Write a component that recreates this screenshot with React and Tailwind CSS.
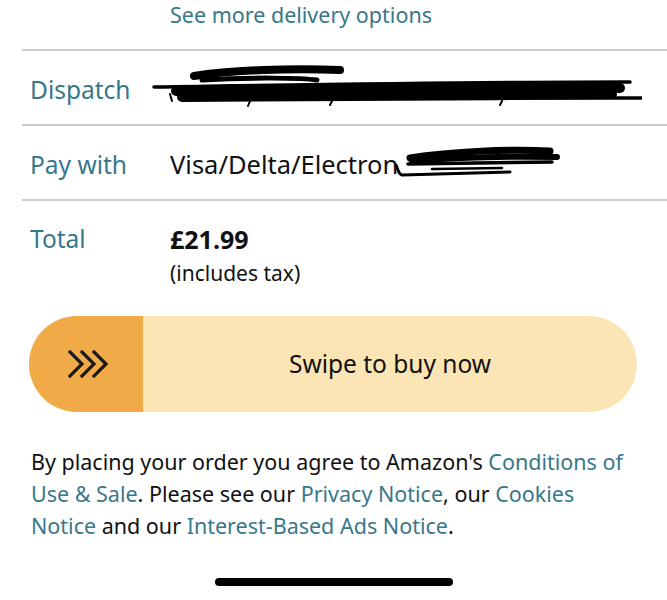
import React from "react";

const teal = "text-[#37788a]";

function Chevrons() {
  return (
    <svg width="42" height="28" viewBox="0 0 42 28" fill="none">
      {[0, 12, 24].map((x) => (
        <path
          key={x}
          d={`M${x + 2} 2 L${x + 14} 14 L${x + 2} 26`}
          stroke="#1a1a1a"
          strokeWidth="3.2"
          strokeLinecap="square"
          strokeLinejoin="miter"
        />
      ))}
    </svg>
  );
}

function DispatchScribble() {
  return (
    <svg width="500" height="50" viewBox="0 0 500 50" fill="none" className="block">
      <path d="M52 12 C90 6 150 4 198 6" stroke="#000" strokeWidth="8" strokeLinecap="round" />
      <path d="M60 16 C110 13 160 14 175 16" stroke="#000" strokeWidth="5" strokeLinecap="round" />
      <path d="M12 23 C150 21 330 18 488 18" stroke="#000" strokeWidth="3.5" strokeLinecap="round" />
      <path d="M34 27 C140 25 300 25 478 24" stroke="#000" strokeWidth="10" strokeLinecap="round" />
      <path d="M40 33 C150 32 320 32 470 30" stroke="#000" strokeWidth="10" strokeLinecap="round" />
      <path d="M320 34 C400 34 460 34 500 34" stroke="#000" strokeWidth="3.5" strokeLinecap="round" />
      <path d="M28 30 L30 37 M108 37 L106 42 M190 37 L188 41 M360 37 L358 41" stroke="#000" strokeWidth="2" strokeLinecap="round" />
    </svg>
  );
}

function PayScribble() {
  return (
    <svg width="170" height="40" viewBox="0 0 170 40" fill="none" className="block">
      <path d="M18 15 C60 8 120 6 158 8" stroke="#000" strokeWidth="7" strokeLinecap="round" />
      <path d="M20 18 C70 14 120 13 165 14" stroke="#000" strokeWidth="6" strokeLinecap="round" />
      <path d="M16 21 C60 20 110 20 160 19" stroke="#000" strokeWidth="3.5" strokeLinecap="round" />
      <path d="M4 22 C6 26 6 31 10 32 C50 31 90 30 118 29" stroke="#000" strokeWidth="3" strokeLinecap="round" />
      <path d="M40 26 L110 25" stroke="#000" strokeWidth="2.5" strokeLinecap="round" />
    </svg>
  );
}

function Row({ label, children }) {
  return (
    <div className="flex h-[75px] items-center border-b-2 border-[#cbcbcb] pt-[5px]">
      <div className={`w-[148px] shrink-0 pl-[8px] text-[24.5px] ${teal}`}>{label}</div>
      <div className="flex-1 min-w-0">{children}</div>
    </div>
  );
}

export default function App() {
  return (
    <div
      className="relative h-[600px] w-[667px] overflow-hidden bg-white text-[#111]"
      style={{ fontFamily: '"Noto Sans", "Open Sans", sans-serif' }}
    >
      <div className="ml-[22px]">
        <div className={`flex h-[51px] items-center border-b-2 border-[#cbcbcb] pl-[148px] pb-[18px] text-[21.5px] ${teal}`}>
          See more delivery options
        </div>
        <Row label="Dispatch">
          <div className="ml-[-28px] mt-[-3px]">
            <DispatchScribble />
          </div>
        </Row>
        <Row label="Pay with">
          <div className="flex items-center text-[25.5px] leading-none">
            <span>Visa/Delta/Electron</span>
            <span className="ml-[-6px] mt-[-4px]">
              <PayScribble />
            </span>
          </div>
        </Row>
        <div className="flex pt-[22px]">
          <div className={`w-[148px] shrink-0 pl-[8px] text-[24.5px] leading-[32px] ${teal}`}>Total</div>
          <div className="flex flex-col">
            <span className="text-[25px] font-bold leading-[32px]">£21.99</span>
            <span className="text-[21px] leading-[36px]">(includes tax)</span>
          </div>
        </div>
      </div>

      <div className="mx-[29px] mt-[25px] flex h-[96px] w-[608px] overflow-hidden rounded-full bg-[#fce5b4]">
        <div className="flex w-[114px] shrink-0 items-center justify-center bg-[#f1aa48] pl-[6px]">
          <Chevrons />
        </div>
        <div className="flex flex-1 items-center justify-center text-[24.5px]">Swipe to buy now</div>
      </div>

      <p className="mt-[34px] pl-[31px] pr-[30px] text-[21.5px] leading-[32px]">
        By placing your order you agree to Amazon's <span className={teal}>Conditions of Use &amp; Sale</span>. Please see our{" "}
        <span className={teal}>Privacy Notice</span>, our <span className={teal}>Cookies Notice</span> and our{" "}
        <span className={teal}>Interest-Based Ads Notice</span>.
      </p>

      <div className="absolute left-[215px] top-[578px] h-[8px] w-[238px] rounded-full bg-black" />
    </div>
  );
}
